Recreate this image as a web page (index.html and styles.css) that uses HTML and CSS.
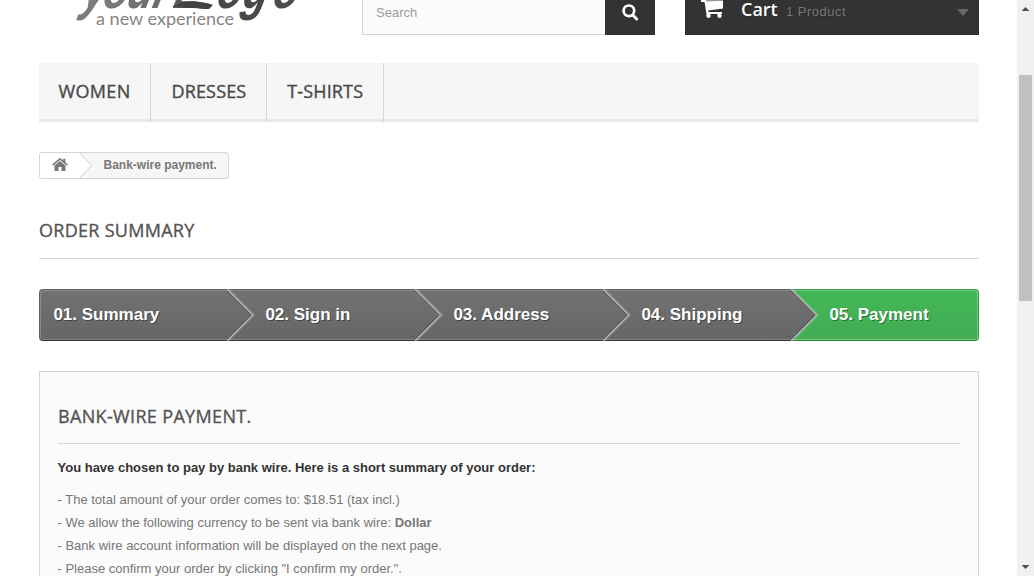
FILE: index.html
```html
<!DOCTYPE html>
<html lang="en">
<head>
<meta charset="utf-8">
<title>Bank-wire payment</title>
<link rel="stylesheet" href="styles.css">
</head>
<body>
<div class="page">
  <header class="header">
    <a class="logo" aria-label="yourLogo, a new experience">
      <svg width="270" height="35" viewBox="0 0 270 35">
        <defs><linearGradient id="ink" x1="0" x2="1"><stop offset="0" stop-color="#7c7e7e"/><stop offset=".4" stop-color="#6c6c6c"/><stop offset=".5" stop-color="#424242"/><stop offset="1" stop-color="#4d4d4d"/></linearGradient></defs>
        <text class="logo-name" x="3 31 66 103 133 194 231 274" y="0" transform="translate(40 8) scale(.7 1) skewX(-20)" fill="url(#ink)">yourLogo</text>
        <path d="M133 7C145-1 163 1 174 5L170 9C155 9 146 5 133 7Z" fill="#424242"/>
        <text class="logo-tag" x="57" y="25" textLength="138" lengthAdjust="spacingAndGlyphs">a new experience</text>
      </svg>
    </a>
    <form class="search">
      <span class="search-field">Search</span>
      <span class="search-button"><svg width="18" height="18" viewBox="0 0 18 18"><circle cx="7.900" cy="6.800" r="5.300" fill="none" stroke="#fff" stroke-width="2.700"/><path d="M12 11.200L15.700 15" stroke="#fff" stroke-width="3" stroke-linecap="round"/></svg></span>
    </form>
    <a class="cart">
      <svg class="cart-icon" width="23" height="18" viewBox="0 0 23 18"><path d="M0 0H5L6 1L22 .500V8.500L7 10.500L7.500 12H21V14H5.500L5 11L3.500 2H0Z" fill="#fff"/><path d="M6 0H22V.800L6 1.500Z" fill="#999"/><circle cx="7.500" cy="15.700" r="2.200" fill="#fff"/><circle cx="18.500" cy="15.700" r="2.200" fill="#fff"/></svg>
      <b class="cart-label">Cart</b><span class="cart-count">1 Product</span>
      <svg class="cart-arrow" width="12" height="8" viewBox="0 0 12 8"><path d="M0 0H12L6 7Z" fill="#686868"/></svg>
    </a>
  </header>
  <nav class="menu"><a class="menu-item women">Women</a><a class="menu-item dresses">Dresses</a><a class="menu-item shirts">T-shirts</a></nav>
  <div class="breadcrumb">
    <span class="home"><svg width="16" height="13" viewBox="0 0 16 13"><path d="M.600 7.100L8 .900L15.400 7.100" fill="none" stroke="#777" stroke-width="1.700"/><path d="M11.200 .800H13.300V5L11.200 3.300Z" fill="#777"/><path d="M2.500 7.600L8 3L13.500 7.600V13H9.500V9H6.500V13H2.500Z" fill="#777"/></svg></span>
    <svg class="crumb-arrow" width="14" height="25" viewBox="0 0 14 25"><path d="M0 0H.500L12.500 12.500L.500 25H0Z" fill="#fff"/><path d="M.500 0L12.500 12.500L.500 25" fill="none" stroke="#d0d0d0"/></svg>
    <span class="crumb">Bank-wire payment.</span>
  </div>
  <h1 class="title">Order summary</h1>
  <ol class="steps">
    <li class="step first"><span>01. Summary</span></li>
    <li class="step"><svg class="tip" width="30" height="52" viewBox="0 0 30 52"><use href="#arrow"/></svg><span>02. Sign in</span></li>
    <li class="step"><svg class="tip" width="30" height="52" viewBox="0 0 30 52"><use href="#arrow"/></svg><span>03. Address</span></li>
    <li class="step"><svg class="tip" width="30" height="52" viewBox="0 0 30 52"><use href="#arrow"/></svg><span>04. Shipping</span></li>
    <li class="step current"><svg class="tip" width="30" height="52" viewBox="0 0 30 52"><use href="#arrow"/></svg><span>05. Payment</span></li>
  </ol>
  <section class="box">
    <h2 class="box-title">Bank-wire payment.</h2>
    <p class="lead">You have chosen to pay by bank wire. Here is a short summary of your order:</p>
    <p class="details">- The total amount of your order comes to: $18.51 (tax incl.)<br>- We allow the following currency to be sent via bank wire: <b>Dollar</b><br>- Bank wire account information will be displayed on the next page.<br>- Please confirm your order by clicking "I confirm my order.".</p>
  </section>
</div>
<div class="scrollbar">
  <svg width="17" height="17" viewBox="0 0 17 17"><path d="M4.500 11L8.500 7L12.500 11Z" fill="#505050"/></svg>
  <div class="thumb"></div>
  <svg class="down" width="17" height="17" viewBox="0 0 17 17"><path d="M4.500 6L8.500 10L12.500 6Z" fill="#505050"/></svg>
</div>
<svg class="symbols" width="0" height="0">
  <defs>
    <linearGradient id="grey" x1="0" y1="0" x2="0" y2="1"><stop offset="0" stop-color="#727272"/><stop offset="1" stop-color="#666"/></linearGradient>
    <symbol id="arrow" viewBox="0 0 30 52">
      <path d="M0 0H1L26 26L1 52H0Z" fill="url(#grey)"/>
      <path d="M-.500 1L24.300 25.800L-.500 51" fill="none" stroke="#484848"/>
      <path d="M0 0L25.800 26L0 52" fill="none" stroke="#bbb" stroke-width="1.300"/>
      <path d="M2 0L27.800 26L2 52" fill="none" stroke="#fff" stroke-opacity=".22"/>
    </symbol>
  </defs>
</svg>
</body>
</html>
```
FILE: styles.css
```css
* { box-sizing: border-box; }
body { margin: 0; height: 576px; display: flex; overflow: hidden; background: #fff; color: #777; font: 13px/18px "Liberation Sans", Arial, sans-serif; }
h1, h2, p, ol { margin: 0; padding: 0; }
.page { width: 1017px; height: 576px; padding: 0 38px 0 39px; overflow: hidden; }
.header { display: flex; height: 63px; align-items: flex-start; }
.logo { width: 323px; height: 35px; }
.logo svg { display: block; }
.logo-name { font: italic bold 60px "Liberation Sans", Arial, sans-serif; }
.logo-tag { font: 17px Lato, sans-serif; fill: #858585; }
.search { display: flex; width: 293px; height: 35px; margin-right: 30px; }
.search-field { width: 243px; padding: 4px 0 0 13px; border: solid #d6d4d4; border-width: 0 0 1px 1px; background: #fbfbfb; color: #9c9b9b; }
.search-button { width: 50px; padding: 4px 0 0 16px; background: #333; }
.search-button svg { display: block; }
.cart { display: flex; width: 294px; height: 35px; padding-left: 16px; background: #333; text-shadow: 1px 1px rgba(0, 0, 0, .2); }
.cart-label { width: 45px; margin-left: 17px; margin-top: -2px; color: #fff; font: 600 18px/23px "Open Sans", sans-serif; }
.cart-count { flex: 1; padding-top: 3px; letter-spacing: .5px; }
.cart-arrow { margin: 9px 10px 0 0; }
.menu { display: flex; height: 59px; background: #f6f6f6; border-bottom: 3px solid #e9e9e9; }
.menu-item { height: 59px; border-right: 1px solid #d6d4d4; padding: 17px 19.5px 0; color: #484848; font: 500 18px/22px "Open Sans", sans-serif; letter-spacing: .15px; -webkit-text-stroke: .35px; text-transform: uppercase; white-space: nowrap; }
.women { width: 112px; letter-spacing: .35px; }
.dresses { width: 116px; padding-left: 20.5px; }
.shirts { width: 117px; padding-left: 20.2px; }
.breadcrumb { display: flex; width: 190px; height: 27px; margin-top: 30px; border: 1px solid #d6d4d4; border-radius: 3px; background: #f6f6f6; overflow: hidden; font-size: 12px; line-height: 24px; font-weight: bold; }
.home { width: 39px; padding: 5px 0 0 11.5px; background: #fff; }
.home svg, .crumb-arrow { display: block; }
.crumb { padding-left: 10.5px; white-space: nowrap; }
.title, .box-title { color: #555454; font: 500 18px/22px "Open Sans", sans-serif; letter-spacing: .28px; -webkit-text-stroke: .35px; text-transform: uppercase; border-bottom: 1px solid #d6d4d4; }
.title { height: 40px; margin-top: 40px; }
.steps { display: flex; height: 52px; margin: 30px 0; list-style: none; }
.step { position: relative; width: 188px; padding: 15px 0 0 38.4px; color: #fff; font-size: 17px; line-height: 20px; font-weight: bold; text-shadow: 1px 1px rgba(0, 0, 0, .4); background: linear-gradient(#727272, #666); border: solid #606060; border-width: 1px 0; border-bottom-color: #333; box-shadow: inset 0 1px #868686, inset 0 -1px #858585; }
.first { padding-left: 13.4px; border-left-width: 1px; border-radius: 4px 0 0 4px; box-shadow: inset 1px 1px #8a8a8a, inset 0 -1px #858585; }
.current { background: linear-gradient(#42b856, #43ab54); border-color: #399b49; border-bottom-color: #208931; border-right-width: 1px; border-radius: 0 4px 4px 0; box-shadow: inset -1px 1px #74c982, inset 0 -1px #74c982; }
.tip { position: absolute; left: 0; top: -1px; }
.box { height: 260px; padding: 33px 18px 0; border: 1px solid #d6d4d4; background: #fbfbfb; }
.box-title { height: 39px; margin-bottom: 15px; letter-spacing: .34px; }
.lead, .details { margin-left: -.5px; }
.lead { margin-bottom: 11px; color: #333; font-weight: bold; }
.details { line-height: 23px; white-space: nowrap; }
.scrollbar { display: flex; flex-direction: column; width: 17px; height: 576px; background: #f1f1f1; }
.thumb { width: 13px; height: 226px; margin: 58px 0 0 2px; background: #c1c1c1; }
.down { margin-top: auto; }
.symbols { position: absolute; }
```
